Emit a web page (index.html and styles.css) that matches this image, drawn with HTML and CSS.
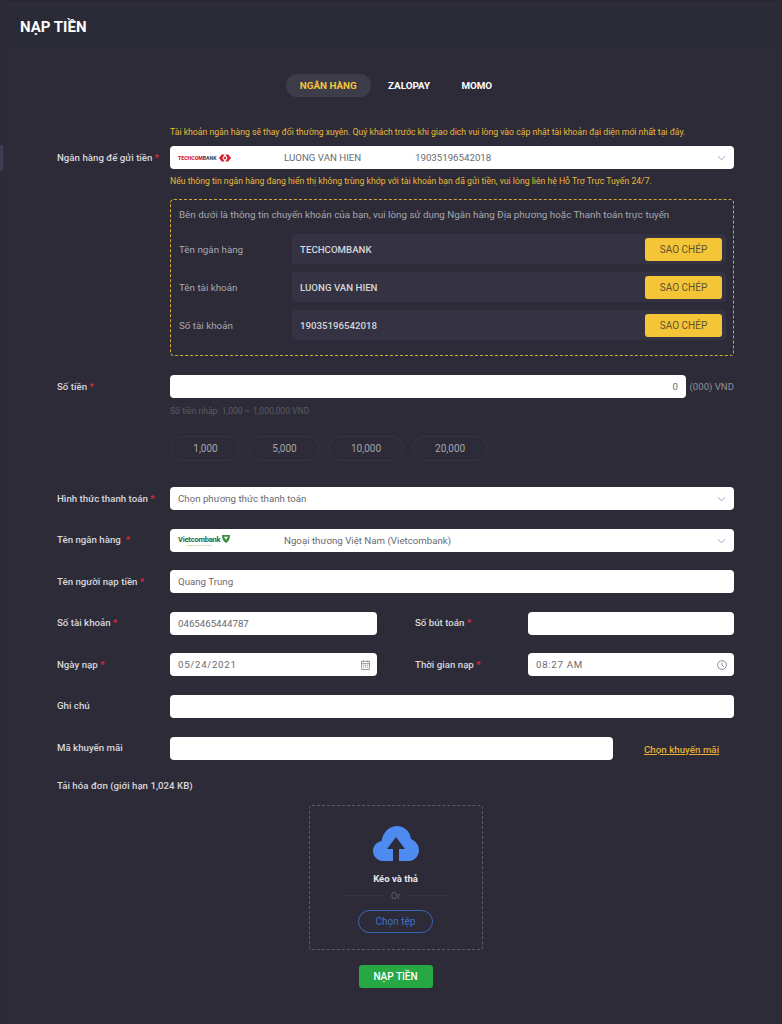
FILE: index.html
```html
<!DOCTYPE html>
<html lang="vi">
<head>
<meta charset="utf-8">
<title>Nạp tiền</title>
<link rel="stylesheet" href="styles.css">
</head>
<body>
<div class="page">
  <aside class="strip"><div class="strip-mark"></div></aside>
  <main class="main">
    <header class="head"><h1>NẠP TIỀN</h1></header>
    <div class="content">
      <nav class="tabs">
        <a class="tab active">NGÂN HÀNG</a>
        <a class="tab">ZALOPAY</a>
        <a class="tab">MOMO</a>
      </nav>

      <p class="note note-first">Tài khoản ngân hàng sẽ thay đổi thường xuyên. Quý khách trước khi giao dich vui lòng vào cập nhật tài khoản đại diện mới nhất tại đây.</p>
      <div class="row">
        <label class="label">Ngân hàng để gửi tiền <span class="req">*</span></label>
        <div class="field select bank-select">
          <span class="logo tcb"><span class="tcb-text"><b>TECHCOM</b>BANK</span>
            <svg class="tcb-mark" viewBox="0 0 14 9"><path d="M0 4.500 3.200.500h3.300L4 4.500 6.500 8.500H3.200zM14 4.500 10.800.500H7.500L10 4.500 7.500 8.500h3.300zM5.400 4.500 7 2.400l1.600 2.100L7 6.600z"/></svg>
          </span>
          <span>LUONG VAN HIEN</span>
          <span>19035196542018</span>
          <svg class="chev" viewBox="0 0 10 6"><path d="M1 1l4 4 4-4"/></svg>
        </div>
      </div>
      <p class="note note-second">Nếu thông tin ngân hàng đang hiển thị không trùng khớp với tài khoản bạn đã gửi tiền, vui lòng liên hệ Hỗ Trợ Trực Tuyến 24/7.</p>

      <section class="info">
        <p class="info-intro">Bên dưới là thông tin chuyển khoản của bạn, vui lòng sử dụng Ngân hàng Địa phương hoặc Thanh toán trực tuyến</p>
        <div class="info-rows">
          <div class="info-row">
            <span class="info-label">Tên ngân hàng</span>
            <div class="info-value"><span>TECHCOMBANK</span><button class="copy">SAO CHÉP</button></div>
          </div>
          <div class="info-row">
            <span class="info-label">Tên tài khoản</span>
            <div class="info-value"><span>LUONG VAN HIEN</span><button class="copy">SAO CHÉP</button></div>
          </div>
          <div class="info-row">
            <span class="info-label">Số tài khoản</span>
            <div class="info-value"><span>19035196542018</span><button class="copy">SAO CHÉP</button></div>
          </div>
        </div>
      </section>

      <div class="row amount-row">
        <label class="label">Số tiền <span class="req">*</span></label>
        <div class="amount">
          <div class="field amount-field">0</div>
          <span class="unit">(000) VND</span>
        </div>
      </div>
      <p class="hint">Số tiền nhập: 1,000 ~ 1,000,000 VND</p>
      <div class="chips">
        <span class="chip">1,000</span>
        <span class="chip">5,000</span>
        <span class="chip">10,000</span>
        <span class="chip">20,000</span>
      </div>

      <div class="rows">
        <div class="row">
          <label class="label">Hình thức thanh toán <span class="req">*</span></label>
          <div class="field select plain">Chọn phương thức thanh toán
            <svg class="chev" viewBox="0 0 10 6"><path d="M1 1l4 4 4-4"/></svg>
          </div>
        </div>
        <div class="row">
          <label class="label">Tên ngân hàng &nbsp;<span class="req">*</span></label>
          <div class="field select bank-select">
            <span class="logo vcb">
              <span class="vcb-words"><span class="vcb-text">Vietcombank</span><span class="vcb-sub">Together for the future</span></span>
              <svg class="vcb-mark" viewBox="0 0 10 11"><path d="M0 1h10c0 5.500-2 8.500-5 10C2 9.500 0 6.500 0 1z"/><path class="vcb-in" d="M2.400 3.200h5.200L5 7.200z"/></svg>
            </span>
            <span>Ngoại thương Việt Nam (Vietcombank)</span>
            <span></span>
            <svg class="chev" viewBox="0 0 10 6"><path d="M1 1l4 4 4-4"/></svg>
          </div>
        </div>
        <div class="row">
          <label class="label">Tên người nạp tiền <span class="req">*</span></label>
          <div class="field">Quang Trung</div>
        </div>
        <div class="row pair">
          <label class="label">Số tài khoản <span class="req">*</span></label>
          <div class="field">0465465444787</div>
          <label class="label second">Số bút toán <span class="req">*</span></label>
          <div class="field"></div>
        </div>
        <div class="row pair">
          <label class="label">Ngày nạp <span class="req">*</span></label>
          <div class="field dated"><span class="spaced">05/24/2021</span>
            <svg class="field-icon" viewBox="0 0 10 11"><path d="M1 1.500h8a.6.6 0 0 1 .6.6v7.800a.6.6 0 0 1-.6.6H1a.6.6 0 0 1-.6-.6V2.100a.6.6 0 0 1 .6-.6zM.4 4h9.200M2.500.3v2M7.500.3v2M2 5.800h1.500M4.300 5.800h1.500M6.600 5.800h1.500M2 7.800h1.500M4.300 7.800h1.500M6.600 7.800h1.500"/></svg>
          </div>
          <label class="label second">Thời gian nạp <span class="req">*</span></label>
          <div class="field dated"><span class="spaced">08:27 AM</span>
            <svg class="field-icon clock" viewBox="0 0 10 10"><circle cx="5" cy="5" r="4.400"/><path d="M5 2.300V5l1.800 1.800"/></svg>
          </div>
        </div>
        <div class="row">
          <label class="label">Ghi chú</label>
          <div class="field"></div>
        </div>
        <div class="row">
          <label class="label">Mã khuyến mãi</label>
          <div class="promo">
            <div class="field promo-field"></div>
            <a class="promo-link">Chọn khuyến mãi</a>
          </div>
        </div>
      </div>

      <p class="label upload-label">Tải hóa đơn (giới hạn 1,024 KB)</p>
      <div class="drop">
        <svg class="cloud" viewBox="0 0 46 35"><path class="cloud-body" d="M10 35C4.500 35 0 30.500 0 25C0 20 3.500 16 8.500 15C10 6.500 16 0 24 0C31.500 0 37 5.500 38 13C42.500 15 46 19 46 24C46 30 41.500 35 36 35Z"/><path class="cloud-arrow" d="M23 11l9 12h-6v12h-6V23h-6z"/></svg>
        <strong class="drop-title">Kéo và thả</strong>
        <div class="or"><span>Or</span></div>
        <button class="choose">Chọn tệp</button>
      </div>
      <button class="submit">NẠP TIỀN</button>
    </div>
  </main>
</div>
</body>
</html>
```
FILE: styles.css
```css
* { box-sizing: border-box; }
html, body { margin: 0; padding: 0; }
body {
  background: #2d2b38;
  font-family: Roboto, "Noto Sans", sans-serif;
  font-size: 10px;
  color: #d6d6da;
}
p, h1 { margin: 0; }
button { font-family: inherit; cursor: pointer; }

.page { display: flex; width: 782px; height: 1024px; overflow: hidden; }
.strip { width: 4px; flex: none; background: #2c2a37; border-right: 1px solid #2f2d3a; padding-top: 145px; }
.strip-mark { height: 26px; background: #3b3d50; }
.main { flex: 1; min-width: 0; }

.head {
  height: 52px;
  padding: 2px 0 0 16px;
  display: flex;
  align-items: center;
  background: #2b2a37;
  border-top: 1px solid #262531;
  border-bottom: 1px solid #302e3b;
}
.head h1 { font-size: 15px; font-weight: 700; color: #fff; }

.content { padding: 22px 48px 0 53px; }

.tabs { display: flex; justify-content: center; gap: 3.500px; height: 23px; margin-left: 1px; }
.tab {
  padding: 0 14px;
  line-height: 23px;
  font-size: 9.800px;
  font-weight: 700;
  color: #fff;
  border-radius: 12px;
}
.tab.active { color: #f5c538; background: #3d3c49; }

.note { margin-left: 113px; font-size: 8.670px; line-height: 14px; color: #e8b93a; white-space: nowrap; }
.note-first { margin-top: 28px; margin-bottom: 7px; }
.note-second { margin-top: 5px; }

.row { display: grid; grid-template-columns: 113px 1fr; align-items: center; }
.label { font-size: 9.700px; line-height: 14px; font-weight: 500; color: #d8d8dc; white-space: nowrap; }
.req { color: #e02b3c; }

.field {
  height: 23px;
  padding: 0 8px;
  display: flex;
  align-items: center;
  background: #fff;
  border-radius: 4px;
  font-size: 9.700px;
  color: #6a6a70;
  white-space: nowrap;
  position: relative;
}
.select { padding-right: 24px; }
.bank-select { display: grid; grid-template-columns: 106px 131px 1fr; }
.chev {
  position: absolute;
  right: 8px;
  top: 9px;
  width: 9px;
  height: 6px;
  fill: none;
  stroke: #8d97a5;
  stroke-width: 1;
}
.logo { display: flex; align-items: center; }
.tcb-text { font-size: 5.200px; font-weight: 700; color: #3a3a3a; }
.tcb-text b { color: #d8202c; }
.tcb-mark { width: 12px; height: 8px; margin-left: 2px; fill: #d8202c; }
.vcb-words { display: flex; flex-direction: column; align-items: center; margin-top: 3px; }
.vcb-text { font-size: 7.500px; line-height: 8px; font-weight: 700; color: #1f6b3a; letter-spacing: -.2px; }
.vcb-sub { font-size: 2.500px; line-height: 3px; color: #9dbb3c; }
.vcb-mark { width: 8px; height: 9px; margin: -3px 0 0 2px; fill: #3b8f3e; }
.vcb-in { fill: #fff; }

.info {
  margin-top: 11px;
  margin-left: 113px;
  height: 157px;
  padding: 8px 7px 0 8px;
  border: 1px dashed #d9a92e;
  border-radius: 4px;
}
.info-intro { font-size: 9.820px; line-height: 14px; color: #a8a8ae; white-space: nowrap; }
.info-rows { display: flex; flex-direction: column; gap: 8px; margin-top: 12px; }
.info-row { display: grid; grid-template-columns: 113px 1fr; align-items: center; }
.info-label { color: #a8a8ae; font-size: 9.800px; }
.info-value {
  height: 30px;
  padding: 0 4px 0 8px;
  display: flex;
  align-items: center;
  justify-content: space-between;
  background: #353343;
  border-radius: 4px;
  color: #d6d6da;
  font-size: 9.700px;
  font-weight: 500;
}
.copy {
  width: 77px;
  height: 23px;
  padding: 0;
  border: 0;
  border-radius: 3px;
  background: #f5c538;
  color: #5e5230;
  font-size: 10px;
}

.amount-row { margin-top: 19px; }
.amount { display: flex; align-items: center; justify-content: space-between; }
.amount-field { width: 516px; justify-content: flex-end; }
.unit { color: #8f8f97; font-size: 9.600px; }
.hint { margin: 6px 0 0 113px; font-size: 8.600px; line-height: 14px; color: #5b5a66; }
.chips { display: flex; gap: 8px; margin: 18px 0 0 113px; }
.chip {
  min-width: 71px;
  height: 25px;
  padding: 0 22px;
  display: flex;
  align-items: center;
  justify-content: center;
  border: 1px solid #35343f;
  border-radius: 13px;
  color: #a5a5ab;
  font-size: 10px;
}

.rows { display: flex; flex-direction: column; gap: 18.600px; margin-top: 26px; }
.pair { grid-template-columns: 113px 207px 151px 1fr; }
.second { margin-left: 38px; }
.dated { justify-content: space-between; padding-right: 7px; }
.spaced { letter-spacing: .7px; }
.field-icon { width: 9px; height: 10px; fill: none; stroke: #6f6f76; stroke-width: .8; }
.clock { width: 10px; height: 10px; }
.promo { display: flex; align-items: center; }
.promo-field { width: 443px; flex: none; }
.promo-link {
  margin-left: 31px;
  color: #e3b034;
  font-size: 9.750px;
  font-weight: 500;
  text-decoration: underline;
  position: relative;
  top: 1px;
}

.upload-label { margin-top: 19px; }
.drop {
  width: 174px;
  height: 145px;
  margin: 12px auto 0;
  padding-top: 20px;
  display: flex;
  flex-direction: column;
  align-items: center;
  border: 1px dashed #5c5b68;
  border-radius: 3px;
}
.cloud { width: 46px; height: 35px; flex: none; }
.cloud-body { fill: #4d8bf0; }
.cloud-arrow { fill: #2d2b38; }
.drop-title { margin-top: 11px; font-size: 9.500px; line-height: 14px; font-weight: 700; color: #e6e6ea; }
.or {
  margin-top: 3px;
  width: 110px;
  display: flex;
  align-items: center;
  gap: 7px;
  font-size: 9.500px;
  line-height: 14px;
  color: #5f5e6a;
}
.or::before, .or::after { content: ""; flex: 1; height: 1px; background: #35343f; }
.choose {
  width: 75px;
  height: 23px;
  margin-top: 7px;
  padding: 0;
  background: transparent;
  border: 1px solid #3a69b4;
  border-radius: 12px;
  color: #3f73c6;
  font-size: 10px;
}
.submit {
  display: block;
  width: 74px;
  height: 23px;
  margin: 15px auto 0;
  padding: 0;
  border: 0;
  border-radius: 3px;
  background: #28a745;
  color: #fff;
  font-size: 10px;
  font-weight: 500;
}
```
